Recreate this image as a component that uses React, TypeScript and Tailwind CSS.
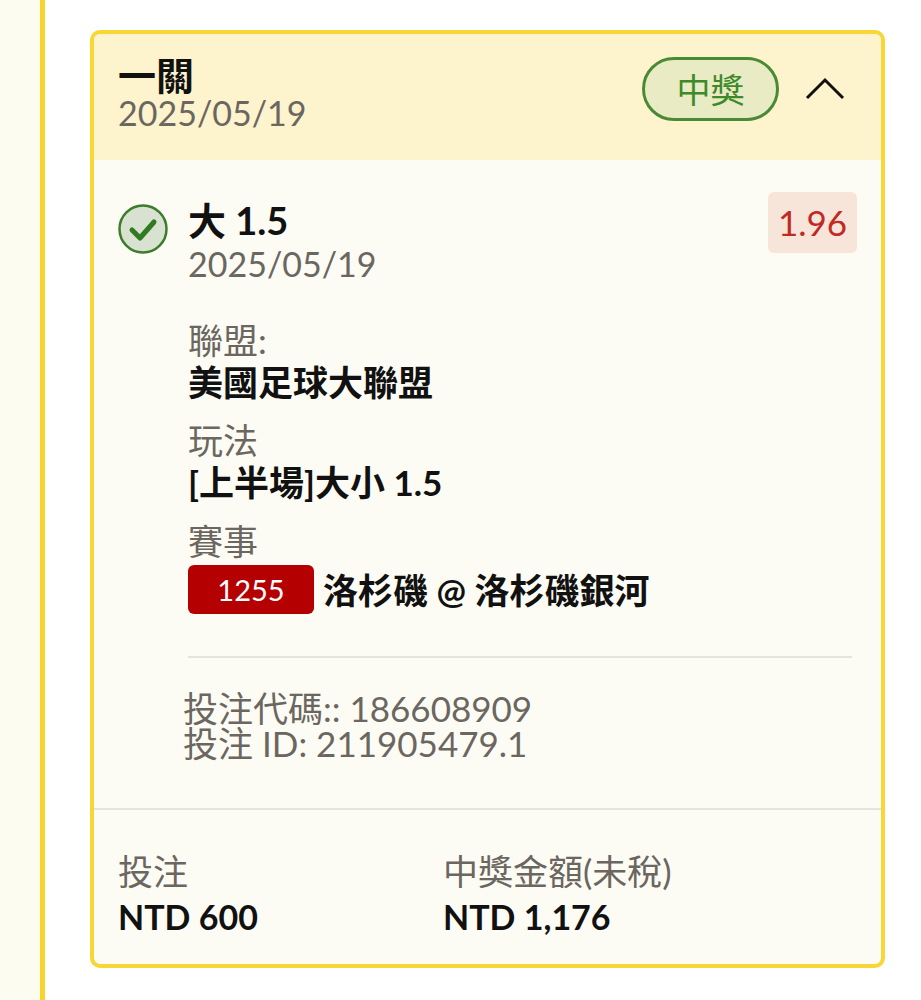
import React from "react";

const font = { fontFamily: "Lato, 'Noto Sans CJK TC', sans-serif" };

export default function App() {
  return (
    <div className="flex w-[921px] h-[1000px] bg-white" style={font}>
      <div className="w-[40px] h-full bg-[#fdfcf1]" />
      <div className="w-[5px] h-full bg-[#f8d52c]" />
      <div className="flex-1 pl-[45px] pt-[30px]">
        <div className="w-[795px] border-[4px] border-[#f8d734] rounded-[10px] overflow-hidden bg-[#fdfcf4]">
          {/* Header */}
          <div className="bg-[#fdf3cd] h-[126px] flex items-start justify-between pl-[24px] pr-[36px] pt-[23px]">
            <div className="flex flex-col">
              <div className="text-[38px] font-bold text-[#111] leading-[36px]">一關</div>
              <div className="text-[34px] text-[#6b6660] leading-[40px]">2025/05/19</div>
            </div>
            <div className="flex items-center gap-[26px]">
              <div className="h-[64px] w-[137px] rounded-full border-[3px] border-[#4a8a34] bg-[#e8ebc3] flex items-center justify-center text-[34px] text-[#3e8a2a]">
                中獎
              </div>
              <svg width="40" height="24" viewBox="0 0 40 24" fill="none">
                <path d="M2 21 L20 3 L38 21" stroke="#111" strokeWidth="3" />
              </svg>
            </div>
          </div>

          {/* Body */}
          <div className="pl-[24px] pr-[24px] pt-[32px]">
            <div className="flex items-start justify-between">
              <div className="flex items-start gap-[20px]">
                <svg width="50" height="50" viewBox="0 0 50 50" className="mt-[12px]">
                  <circle cx="25" cy="25" r="23.5" fill="#d9e1d0" stroke="#3c7d2c" strokeWidth="2.5" />
                  <path d="M14 26 L22 34 L36 18" stroke="#2f7a22" strokeWidth="5" fill="none" strokeLinecap="round" strokeLinejoin="round" />
                </svg>
                <div className="flex flex-col">
                  <div className="text-[38px] font-bold text-[#111] leading-[42px] mt-[7px]">大 1.5</div>
                  <div className="text-[34px] text-[#6b6660] leading-[40px] mt-[3px]">2025/05/19</div>
                </div>
              </div>
              <div className="h-[61px] w-[89px] rounded-[6px] bg-[#f7e5da] flex items-center justify-center text-[35px] text-[#c12a24]">
                1.96
              </div>
            </div>

            <div className="pl-[70px] pr-[5px]">
              <div className="mt-[35px] text-[35px] text-[#6b6660] leading-[42px]">聯盟:</div>
              <div className="text-[35px] font-bold text-[#111] leading-[42px]">美國足球大聯盟</div>
              <div className="mt-[16px] text-[35px] text-[#6b6660] leading-[42px]">玩法</div>
              <div className="text-[35px] font-bold text-[#111] leading-[42px]">[上半場]大小 1.5</div>
              <div className="mt-[17px] text-[35px] text-[#6b6660] leading-[42px]">賽事</div>
              <div className="flex items-center gap-[9px] mt-[3px]">
                <div className="h-[49px] w-[126px] rounded-[6px] bg-[#b40000] flex items-center justify-center text-[29px] text-white">
                  1255
                </div>
                <div className="text-[35px] font-bold text-[#111] leading-[42px]">洛杉磯 @ 洛杉磯銀河</div>
              </div>
              <div className="mt-[42px] h-[2px] bg-[#e4e3dc]" />
              <div className="mt-[33px] -ml-[5px] text-[35px] text-[#6b6660] leading-[35px]">
                <div>投注代碼:: 186608909</div>
                <div>投注 ID: 211905479.1</div>
              </div>
            </div>
          </div>
          <div className="mt-[47px] h-[2px] bg-[#e4e3dc]" />

          {/* Footer */}
          <div className="flex pl-[24px] pt-[40px] pb-[27px]">
            <div className="w-[325px]">
              <div className="text-[35px] text-[#6b6660] leading-[42px]">投注</div>
              <div className="text-[34px] font-bold text-[#111] leading-[40px] mt-[5px]">NTD 600</div>
            </div>
            <div>
              <div className="text-[35px] text-[#6b6660] leading-[42px]">中獎金額(未稅)</div>
              <div className="text-[34px] font-bold text-[#111] leading-[40px] mt-[5px]">NTD 1,176</div>
            </div>
          </div>
        </div>
      </div>
    </div>
  );
}
